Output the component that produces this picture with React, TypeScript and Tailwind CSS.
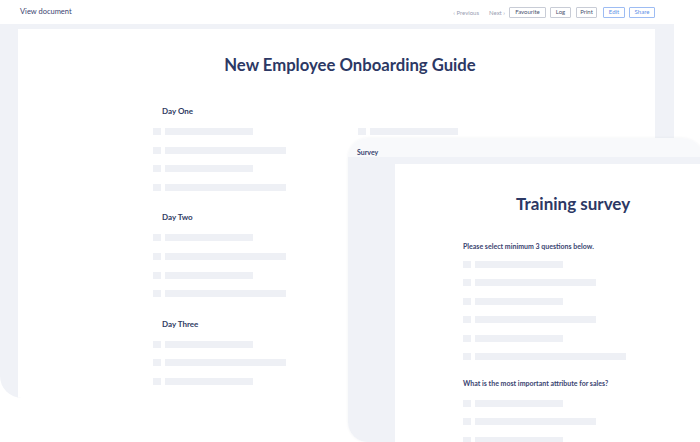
import React from "react";

const font = { fontFamily: 'Lato, "Open Sans", "Liberation Sans", sans-serif' };

function Row({ w }: { w: number }) {
  return (
    <div className="flex items-center h-[7px] gap-[4px]">
      <div className="w-[8px] h-[7px] bg-[#eef0f5]" />
      <div className="h-[7px] bg-[#eef0f5]" style={{ width: w }} />
    </div>
  );
}

function Section({ title, widths }: { title: string; widths: number[] }) {
  return (
    <div className="flex flex-col">
      <div className="mt-[3.5px] h-[10px] pl-[9px] text-[8px] leading-[10px] font-bold text-[#2f3a63]">{title}</div>
      <div className="mt-[12px] flex flex-col gap-[11.65px]">
        {widths.map((w, i) => (
          <Row key={i} w={w} />
        ))}
      </div>
    </div>
  );
}

function Btn({ label, blue, w }: { label: string; blue?: boolean; w: string }) {
  return (
    <div
      className={
        "h-[11px] flex items-center justify-center text-[6px] leading-none border rounded-[1px] " +
        w +
        " " +
        (blue ? "border-[#9dbcf3] text-[#5d8fe6]" : "border-[#c8ccd6] text-[#4b5470]")
      }
    >
      {label}
    </div>
  );
}

export default function App() {
  return (
    <div className="relative w-[700px] h-[442px] overflow-hidden bg-white antialiased" style={font}>
      {/* Main window */}
      <div className="absolute left-0 top-0 w-[674px] h-[398px] flex flex-col rounded-bl-[22px] overflow-hidden">
        <div className="h-[24px] bg-white flex items-center pl-[20px]">
          <div className="text-[7.5px] text-[#3a4470]">View document</div>
          <div className="ml-auto flex items-center pr-[19px]">
            <div className="text-[6px] text-[#9aa0b3] mr-[10px]">‹ Previous</div>
            <div className="text-[6px] text-[#9aa0b3] mr-[4px]">Next ›</div>
            <Btn label="Favourite" w="w-[37px]" />
            <div className="w-[4px]" />
            <Btn label="Log" w="w-[21px]" />
            <div className="w-[5px]" />
            <Btn label="Print" w="w-[21px]" />
            <div className="w-[6px]" />
            <Btn label="Edit" blue w="w-[22px]" />
            <div className="w-[4px]" />
            <Btn label="Share" blue w="w-[26px]" />
          </div>
        </div>
        <div className="flex-1 bg-[#f0f2f7] pl-[18px] pr-[19px] pt-[5px] flex">
          <div className="flex-1 bg-white flex flex-col">
            <div className="pt-[24px] pl-[27px] text-center text-[16.7px] leading-[24px] font-bold text-[#2c3864]">
              New Employee Onboarding Guide
            </div>
            <div className="mt-[25.5px] pl-[135px] flex">
              <div className="w-[205px] flex flex-col gap-[18px]">
                <Section title="Day One" widths={[88, 121, 88, 121]} />
                <Section title="Day Two" widths={[88, 121, 88, 121]} />
                <Section title="Day Three" widths={[88, 121, 88]} />
              </div>
              <div className="pt-[25.5px]">
                <Row w={88} />
              </div>
            </div>
          </div>
        </div>
      </div>

      {/* Survey window */}
      <div className="absolute left-[348px] top-[138px] w-[356px] h-[304px] flex flex-col rounded-tl-[20px] rounded-tr-[22px] rounded-bl-[20px] overflow-hidden shadow-[0_0_3px_rgba(40,50,90,0.06)]">
        <div className="h-[25px] bg-[#f8f9fb] pl-[9px] pt-[9px] text-[7px] leading-[10px] font-bold text-[#3a4470]">
          Survey
        </div>
        <div className="flex-1 bg-[#f0f2f7] pl-[47px] pt-[7px] flex">
          <div className="flex-1 bg-white flex flex-col">
            <div className="pt-[28px] pl-[121px] text-[17px] leading-[24px] font-bold text-[#2c3864]">
              Training survey
            </div>
            <div className="pl-[68px] flex flex-col">
              <div className="mt-[25px] h-[10px] text-[7px] leading-[10px] font-bold text-[#3a4470]">
                Please select minimum 3 questions below.
              </div>
              <div className="mt-[10px] flex flex-col gap-[11.4px]">
                <Row w={88} />
                <Row w={121} />
                <Row w={88} />
                <Row w={121} />
                <Row w={88} />
                <Row w={151} />
              </div>
              <div className="mt-[18.5px] h-[10px] text-[7px] leading-[10px] font-bold text-[#3a4470]">
                What is the most important attribute for sales?
              </div>
              <div className="mt-[11.5px] flex flex-col gap-[11.4px]">
                <Row w={88} />
                <Row w={121} />
                <Row w={88} />
              </div>
            </div>
          </div>
        </div>
      </div>
    </div>
  );
}
